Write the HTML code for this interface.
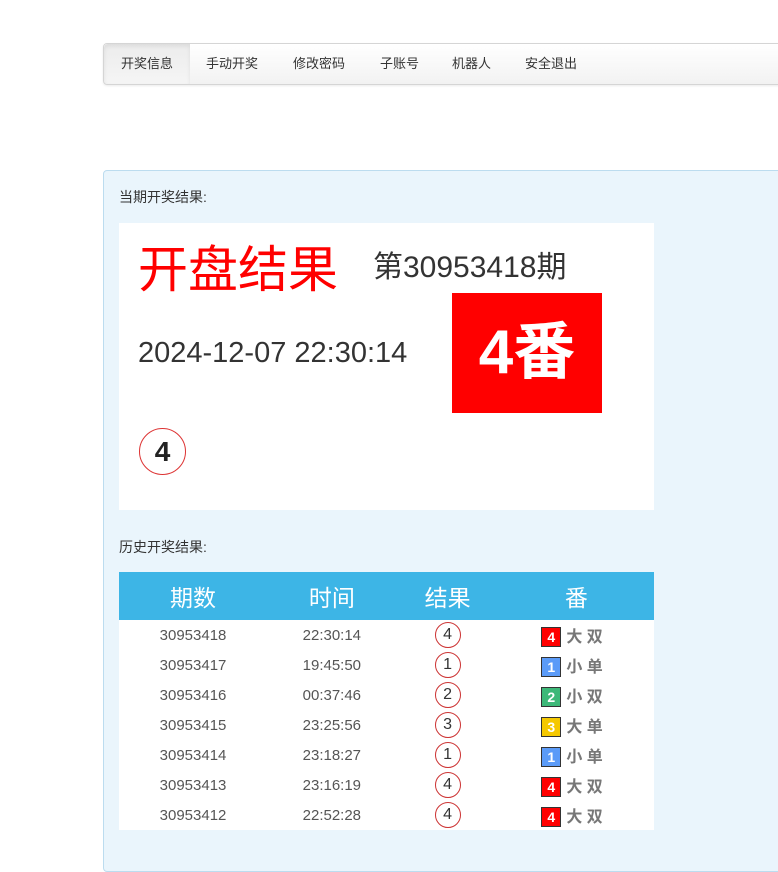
<!DOCTYPE html>
<html><head><meta charset="utf-8"><style>
body{margin:0;width:778px;height:823px;overflow:hidden;background:#fff;font-family:"Liberation Sans","Noto Sans CJK SC",sans-serif;position:relative}
.nav{position:absolute;left:103px;top:43px;width:700px;height:40px;border:1px solid #d5d5d5;border-radius:4px;background:linear-gradient(#fff,#f2f2f2);box-shadow:0 1px 2px rgba(0,0,0,.08)}
.nav span{position:absolute;top:0;height:40px;line-height:40px;font-size:13px;color:#333}
.nav .act{left:0;width:86px;text-align:center;background:linear-gradient(#ececec,#f5f5f5);box-shadow:inset 0 2px 4px rgba(0,0,0,.08);border-radius:4px 0 0 4px}
.panel{position:absolute;left:103px;top:170px;width:700px;height:700px;background:#eaf5fc;border:1px solid #bcdcef;border-radius:4px}
.lbl{position:absolute;left:119px;font-size:14px;color:#333}
.box{position:absolute;left:119px;top:223px;width:535px;height:287px;background:#fff}
.t1{position:absolute;left:138px;top:240px;font-size:50px;color:#f00;line-height:60px}
.t2{position:absolute;left:373px;top:250px;font-size:30px;color:#333;line-height:36px}
.t3{position:absolute;left:138px;top:335px;font-size:29px;color:#333;line-height:36px}
.big{position:absolute;left:452px;top:293px;width:150px;height:120px;background:#f00;color:#fff;font-size:62px;font-weight:bold;text-align:center;line-height:120px}
.c1{position:absolute;left:139px;top:428px;width:45px;height:45px;border:1px solid #d33;border-radius:50%;text-align:center;line-height:45px;font-size:28px;font-weight:bold;color:#222}
table{position:absolute;left:119px;top:572px;width:535px;border-collapse:collapse;background:#fff}
th{background:#3db5e6;color:#fff;font-weight:normal;font-size:23px;height:48px;padding:0}
td{height:30px;padding:0;text-align:center;font-size:15px;color:#555}
.c{display:inline-block;width:24px;height:24px;border:1px solid #c33;border-radius:50%;line-height:24px;color:#333;font-size:16px}
.f{display:inline-block;text-align:left;width:70px;font-weight:bold;color:#777;font-size:16px}
.f b{display:inline-block;width:18px;height:18px;line-height:18px;text-align:center;color:#fff;border:1px solid #333;margin-right:5px;font-size:14px}
</style></head><body>
<div class="nav"><span class="act">开奖信息</span><span style="left:102px">手动开奖</span><span style="left:189px">修改密码</span><span style="left:276px">子账号</span><span style="left:348px">机器人</span><span style="left:421px">安全退出</span></div>
<div class="panel"></div>
<div class="lbl" style="top:187px">当期开奖结果:</div>
<div class="box"></div>
<div class="t1">开盘结果</div>
<div class="t2">第30953418期</div>
<div class="t3">2024-12-07 22:30:14</div>
<div class="big">4番</div>
<div class="c1">4</div>
<div class="lbl" style="top:537px">历史开奖结果:</div>
<table>
<tr><th>期数</th><th>时间</th><th>结果</th><th>番</th></tr>
<tr><td>30953418</td><td>22:30:14</td><td><span class="c">4</span></td><td><span class="f"><b style="background:#f00">4</b>大 双</span></td></tr>
<tr><td>30953417</td><td>19:45:50</td><td><span class="c">1</span></td><td><span class="f"><b style="background:#5b9bf8">1</b>小 单</span></td></tr>
<tr><td>30953416</td><td>00:37:46</td><td><span class="c">2</span></td><td><span class="f"><b style="background:#3cb878">2</b>小 双</span></td></tr>
<tr><td>30953415</td><td>23:25:56</td><td><span class="c">3</span></td><td><span class="f"><b style="background:#f5c800">3</b>大 单</span></td></tr>
<tr><td>30953414</td><td>23:18:27</td><td><span class="c">1</span></td><td><span class="f"><b style="background:#5b9bf8">1</b>小 单</span></td></tr>
<tr><td>30953413</td><td>23:16:19</td><td><span class="c">4</span></td><td><span class="f"><b style="background:#f00">4</b>大 双</span></td></tr>
<tr><td>30953412</td><td>22:52:28</td><td><span class="c">4</span></td><td><span class="f"><b style="background:#f00">4</b>大 双</span></td></tr>
</table>
</body></html>
